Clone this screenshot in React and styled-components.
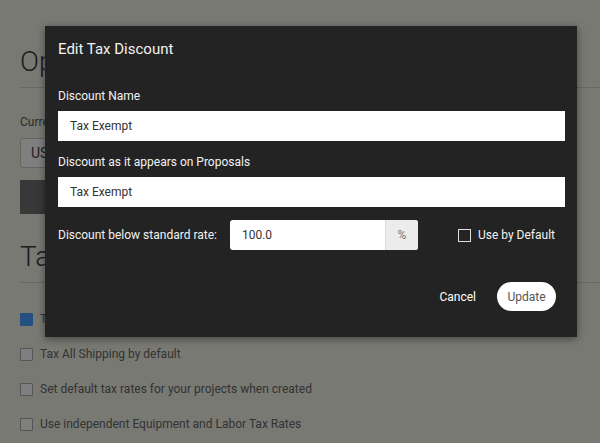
import React from 'react';
import styled, {createGlobalStyle} from 'styled-components';

const GlobalStyle=createGlobalStyle`
	html,body{
		margin:0;
		padding:0;
		background:#f2f2e8;
	}
	body{
		font-family:Roboto,'Noto Sans',sans-serif;
		overflow:hidden;
	}
	*{box-sizing:border-box;}
`

const Page=styled.div`
	width:600px;
	height:443px;
	padding:0 0 0 20px;
	color:#5a5a5a;
	position:relative;
	overflow:hidden;
`
const SectionTitle=styled.h2`
	margin:${p=>p.$gap}px 0 0;
	padding:${p=>p.$top}px 0 7px;
	font-size:28px;
	font-weight:300;
	line-height:36px;
	color:#3a3a3a;
	border-bottom:1px solid #d0d0c8;
`
const FieldLabel=styled.div`
	margin-top:26px;
	font-size:12px;
	line-height:16px;
	color:#555;
`
const CurrencySelect=styled.div`
	margin-top:8px;
	width:120px;
	height:30px;
	border:1px solid #c9c9c2;
	border-radius:3px;
	background:#fff;
	padding:6px 10px;
	font-size:14px;
	color:#444;
`
const DarkButton=styled.div`
	margin-top:12px;
	width:110px;
	height:34px;
	background:#707070;
	color:#e8e8e8;
	font-size:12px;
	letter-spacing:1px;
	display:flex;
	align-items:center;
	justify-content:center;
`
const CheckList=styled.div`
	display:flex;
	flex-direction:column;
	gap:21px;
	margin-top:29px;
`
const CheckRow=styled.div`
	display:flex;
	align-items:center;
	gap:7px;
	height:14px;
	font-size:12px;
	color:#666;
`
const Box=styled.span`
	width:13px;
	height:13px;
	flex:none;
	border:1px solid ${p=>p.$checked?'#4a9fff':'#aaa'};
	background:${p=>p.$checked?'#4a9fff':'#fff'};
	border-radius:1px;
`

const Overlay=styled.div`
	position:absolute;
	inset:0;
	background:rgba(0,0,0,0.5);
`
const Modal=styled.div`
	position:absolute;
	left:45px;
	top:26px;
	width:532px;
	height:311px;
	background:#232323;
	box-shadow:0 2px 8px rgba(0,0,0,0.45);
	padding:13px 12px 0 13px;
	color:#f2f2f2;
`
const ModalTitle=styled.div`
	font-size:15px;
	line-height:20px;
	margin-bottom:29px;
`
const Group=styled.div`
	margin-bottom:13px;
`
const Label=styled.div`
	font-size:12px;
	line-height:16px;
	margin-bottom:7px;
`
const TextInput=styled.div`
	height:30px;
	background:#fff;
	color:#333;
	font-size:12px;
	line-height:30px;
	padding-left:12px;
`
const RateRow=styled.div`
	display:flex;
	align-items:center;
	height:30px;
	padding-right:10px;
`
const RateLabel=styled.div`
	font-size:12px;
	margin-right:13px;
`
const InputGroup=styled.div`
	display:flex;
	width:188px;
	height:30px;
	border-radius:3px;
	overflow:hidden;
	background:#fff;
`
const RateValue=styled.div`
	flex:1;
	color:#333;
	font-size:12px;
	line-height:30px;
	padding-left:12px;
`
const Addon=styled.div`
	width:33px;
	background:#ececec;
	color:#777;
	font-size:12px;
	display:flex;
	align-items:center;
	justify-content:center;
	border-left:1px solid #ddd;
`
const DefaultCheck=styled.div`
	margin-left:auto;
	display:flex;
	align-items:center;
	gap:7px;
	font-size:12px;
`
const DarkBox=styled.span`
	width:13px;
	height:13px;
	border:1px solid #ddd;
`
const Footer=styled.div`
	display:flex;
	justify-content:flex-end;
	align-items:center;
	gap:21px;
	margin-top:32px;
	padding-right:9px;
`
const CancelButton=styled.div`
	font-size:12px;
	color:#fff;
`
const UpdateButton=styled.div`
	width:59px;
	height:29px;
	border-radius:15px;
	background:#fff;
	color:#555;
	font-size:12px;
	display:flex;
	align-items:center;
	justify-content:center;
`

const App = () => {
	const options=[
		{text:'Tax All Labor by default',checked:true},
		{text:'Tax All Shipping by default'},
		{text:'Set default tax rates for your projects when created'},
		{text:'Use independent Equipment and Labor Tax Rates'},
	]
	return (
		<>
			<GlobalStyle />
			<Page>
				<SectionTitle $gap={0} $top={44}>Options</SectionTitle>
				<FieldLabel>Currency</FieldLabel>
				<CurrencySelect>USD</CurrencySelect>
				<DarkButton>UPDATE</DarkButton>
				<SectionTitle $gap={25} $top={0}>Taxes</SectionTitle>
				<CheckList>
					{options.map(o=>(
						<CheckRow key={o.text}>
							<Box $checked={o.checked}/>
							{o.text}
						</CheckRow>
					))}
				</CheckList>
				<Overlay />
				<Modal>
					<ModalTitle>Edit Tax Discount</ModalTitle>
					<Group>
						<Label>Discount Name</Label>
						<TextInput>Tax Exempt</TextInput>
					</Group>
					<Group>
						<Label>Discount as it appears on Proposals</Label>
						<TextInput>Tax Exempt</TextInput>
					</Group>
					<RateRow>
						<RateLabel>Discount below standard rate:</RateLabel>
						<InputGroup>
							<RateValue>100.0</RateValue>
							<Addon>%</Addon>
						</InputGroup>
						<DefaultCheck>
							<DarkBox />
							Use by Default
						</DefaultCheck>
					</RateRow>
					<Footer>
						<CancelButton>Cancel</CancelButton>
						<UpdateButton>Update</UpdateButton>
					</Footer>
				</Modal>
			</Page>
		</>
	)
}

export default App
